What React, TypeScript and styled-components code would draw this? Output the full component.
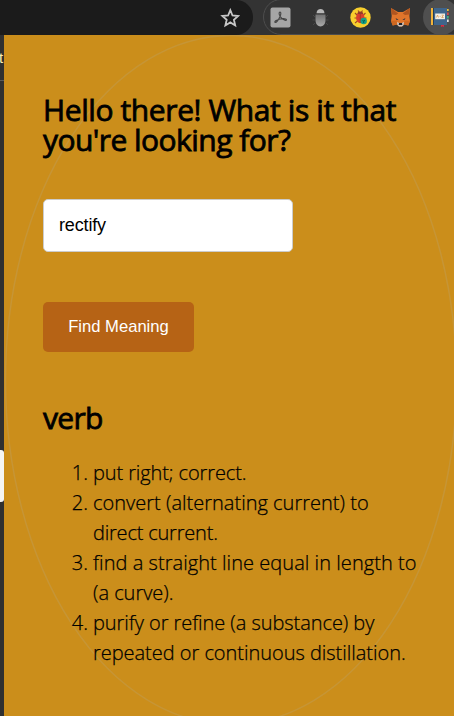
import React from "react";
import styled, { createGlobalStyle } from "styled-components";

const GlobalStyle = createGlobalStyle`
  * { box-sizing: border-box; }
  body { margin: 0; background: #cb8e1b; overflow: hidden; }
`;

const Screen = styled.div`
  width: 454px;
  height: 716px;
  display: flex;
  flex-direction: column;
  overflow: hidden;
  font-family: "Open Sans", "Noto Sans", sans-serif;
`;

const BrowserBar = styled.header`
  height: 35px;
  flex: none;
  display: flex;
  background: #333333;
  overflow: hidden;
`;

const AddressBar = styled.div`
  width: 253px;
  height: 35px;
  flex: none;
  display: flex;
  justify-content: flex-end;
  padding: 8px 13px 0 0;
  background: #1b1b1b;
  border-radius: 0 17px 17px 0;
`;

const Extensions = styled.div`
  width: 220px;
  height: 36px;
  flex: none;
  margin: -1px 0 0 10px;
  display: flex;
  align-items: flex-start;
  padding-top: 7px;
  padding-left: 6px;
  gap: 19px;
  border: 1px solid #4d4d4d;
  border-radius: 18px;
`;

const Extension = styled.span<{ $active?: boolean }>`
  width: ${(p) => (p.$active ? 36 : 21)}px;
  height: ${(p) => (p.$active ? 36 : 21)}px;
  margin: ${(p) => (p.$active ? "-8px 0 0 -7px" : "0")};
  padding-right: ${(p) => (p.$active ? 2 : 0)}px;
  border-radius: 50%;
  background: ${(p) => (p.$active ? "#4f4f4f" : "transparent")};
  display: flex;
  align-items: center;
  justify-content: center;
  flex: none;
`;

const Body = styled.div`
  flex: 1;
  display: flex;
`;

const PageEdge = styled.div`
  width: 4px;
  flex: none;
  display: flex;
  flex-direction: column;
  background: #303030;
  overflow: hidden;
`;

const EdgeHeader = styled.div`
  height: 46px;
  flex: none;
  padding-top: 13px;
  border-bottom: 1px solid #5a5a5a;
  color: #fbeeb0;
  font: 15px/20px "Liberation Sans", sans-serif;
  text-indent: -1px;
`;

const EdgeBubble = styled.div`
  height: 52px;
  margin-top: 369px;
  flex: none;
  background: #f5f5f5;
  border-radius: 0 3px 3px 0;
`;

const Popup = styled.main`
  position: relative;
  flex: 1;
  padding: 60px 28px 0 39px;
  background: #cb8e1b;
  color: #000;
`;

const Ring = styled.svg`
  position: absolute;
  inset: 0;
`;

const Content = styled.div`
  position: relative;
  display: flex;
  flex-direction: column;
  align-items: flex-start;
`;

const Heading = styled.h1`
  margin: 0;
  font-size: 30px;
  line-height: 30px;
  font-weight: 400;
  -webkit-text-stroke: 0.8px #000;
`;

const Line = styled.span<{ $track: number }>`
  display: block;
  white-space: nowrap;
  letter-spacing: ${(p) => p.$track}px;
`;

const WordInput = styled.input`
  width: 250px;
  height: 53px;
  margin-top: 44px;
  padding: 0 15px;
  border: 1px solid #cccccc;
  border-radius: 5px;
  background: #fff;
  color: #000;
  font: 18px "Liberation Sans", Arial, sans-serif;
  letter-spacing: -0.15px;
  outline: none;
`;

const FindButton = styled.button`
  width: 151px;
  height: 50px;
  margin-top: 50px;
  padding: 0;
  border: 0;
  border-radius: 5px;
  background: #b66315;
  color: #fff;
  font: 16.6px "Liberation Sans", Arial, sans-serif;
`;

const PartOfSpeech = styled(Heading).attrs({ as: "h2" })`
  margin-top: 51px;
`;

const Meanings = styled.ol`
  margin: 25px 0 0;
  padding: 0;
  list-style: none;
  font-size: 20px;
  line-height: 30px;
  font-weight: 300;
  -webkit-text-stroke: 0.25px #000;
`;

const Meaning = styled.li`
  display: grid;
  grid-template-columns: 45px auto;
  column-gap: 5px;
`;

const Marker = styled.span`
  text-align: right;
`;

type TextLine = { text: string; track: number };

const greeting: TextLine[] = [
  { text: "Hello there! What is it that", track: -0.4 },
  { text: "you're looking for?", track: -0.55 },
];

const meanings: TextLine[][] = [
  [{ text: "put right; correct.", track: -0.11 }],
  [
    { text: "convert (alternating current) to", track: 0.01 },
    { text: "direct current.", track: -0.2 },
  ],
  [
    { text: "find a straight line equal in length to", track: 0.05 },
    { text: "(a curve).", track: -0.03 },
  ],
  [
    { text: "purify or refine (a substance) by", track: -0.06 },
    { text: "repeated or continuous distillation.", track: -0.03 },
  ],
];

const StarIcon = () => (
  <svg width="20" height="20" viewBox="0 0 20 20">
    <path
      d="M10.3 2.2 L12.5 7.5 L18.2 8 L13.9 11.8 L15.2 17.4 L10.3 14.4 L5.4 17.4 L6.7 11.8 L2.4 8 L8.1 7.5 Z"
      fill="none"
      stroke="#c8c8c8"
      strokeWidth="1.8"
    />
  </svg>
);

const PdfIcon = () => (
  <svg width="21" height="21" viewBox="0 0 21 21">
    <rect x="0.5" y="0.5" width="20" height="20" rx="2" fill="#a5a5a5" />
    <path
      d="M9.6 5.2 C11.4 4.5 11 7.5 9.9 9.8 C8.8 12.4 6.3 16 5 15.4 C3.8 14.5 7.5 12.6 10.3 12 C13.3 11.3 16.9 11.6 16.5 12.9 C15.9 14.1 12.3 12.4 10.9 10.4 C9.5 8.5 8.8 6 9.6 5.2 Z"
      fill="none"
      stroke="#454545"
      strokeWidth="1.1"
    />
  </svg>
);

const GreyBugIcon = () => (
  <svg width="21" height="21" viewBox="0 0 21 21">
    <defs>
      <linearGradient id="shell" x1="0" y1="0" x2="0" y2="1">
        <stop offset="0" stopColor="#727272" />
        <stop offset="1" stopColor="#aaa" />
      </linearGradient>
    </defs>
    <path d="M3 8 L5 10 M2.5 13 H5 M3 18 L5 16 M18 8 L16 10 M18.5 13 H16 M18 18 L16 16" stroke="#484848" />
    <path d="M6.5 6.3 C6.5 0.5 14.5 0.5 14.5 6.3 Z" fill="#b8b8b8" />
    <path d="M5.5 7.5 H15.5 V13 C15.5 21.5 5.5 21.5 5.5 13 Z" fill="url(#shell)" />
  </svg>
);

const RedBugIcon = () => (
  <svg width="21" height="21" viewBox="0 0 21 21">
    <circle cx="10.5" cy="10.5" r="10.2" fill="#f8cf2d" />
    <path
      d="M5 6 L7 8 M4.5 11 H7 M5 16 L7.5 14 M15.5 6 L13.5 8 M16.5 11 H14 M8 3.5 L9.5 5.5 M12.5 3.5 L11.2 5.5"
      stroke="#9b4a27"
      strokeWidth="1.1"
    />
    <ellipse cx="10.3" cy="10.7" rx="4.2" ry="5.5" fill="#d8402c" />
    <path d="M7.4 7 C7.4 3.8 13.2 3.8 13.2 7 Z" fill="#963b2b" />
    <path d="M10.3 7 V16" stroke="#a23226" strokeWidth="0.8" />
    <circle cx="13.7" cy="14" r="3.2" fill="#14a086" />
    <path d="M12.5 13 L13.7 14.2 L15 13 M13.7 14.2 V16" stroke="#075f53" fill="none" />
  </svg>
);

const FoxIcon = () => (
  <svg width="21" height="21" viewBox="0 0 21 21">
    <path d="M1 1 L8 5 H13 L20 1 L19.4 9 L20 14 L18.3 18.5 L14 17.5 L12 19.5 H9 L7 17.5 L2.7 18.5 L1 14 L1.7 9 Z" fill="#e0752b" />
    <path d="M1 1 L8.2 6.5 L6 8 L2 7.5 Z M20 1 L12.8 6.5 L15 8 L19 7.5 Z" fill="#b0551f" />
    <path d="M1 14 L6.5 13.5 L7.2 17.5 L2.7 18.5 Z M20 14 L14.5 13.5 L13.8 17.5 L18.3 18.5 Z" fill="#cf6820" />
    <path d="M5.5 11 L8.6 12.7 L6.6 13 Z M15.5 11 L12.4 12.7 L14.4 13 Z" fill="#30333c" />
    <path d="M7 15 L9 16 H12 L14 15 L13.6 18 L12 19.5 H9 L7.4 18 Z" fill="#ccc6c0" />
    <path d="M9 16 H12 L12.3 18 H8.7 Z" fill="#20232c" />
  </svg>
);

const DictionaryIcon = () => (
  <svg width="20" height="20" viewBox="0 0 20 20">
    <path d="M17 2 H18.7 V4 H17 Z" fill="#eac23d" />
    <path d="M17 5.5 H18.7 V8 H17 Z" fill="#d94848" />
    <path d="M17 9 H18.7 V11.5 H17 Z" fill="#45b284" />
    <path d="M17 12.5 H18.7 V15 H17 Z" fill="#e3e3e3" />
    <path d="M2 1 H17 V18 H2 Z" fill="#3f658b" />
    <path d="M1 1 H3 V18 H1 Z" fill="#f0b33a" />
    <path d="M3 1 H4 V18 H3 Z" fill="#263d55" />
    <path d="M5.2 6.5 H15 V12.2 H5.2 Z" fill="#f1eee5" />
    <path d="M6.5 10.5 L7.5 8 L8.5 10.5 M9.6 9.4 H10.6 M11.6 8.2 H13.5 L11.7 10.5 H13.6" stroke="#dc9b54" strokeWidth="0.8" fill="none" />
    <path d="M11 18 H14 V20 L12.5 19.3 L11 20 Z" fill="#df2742" />
  </svg>
);

export default function App() {
  return (
    <Screen>
      <GlobalStyle />
      <BrowserBar>
        <AddressBar>
          <StarIcon />
        </AddressBar>
        <Extensions>
          <Extension><PdfIcon /></Extension>
          <Extension><GreyBugIcon /></Extension>
          <Extension><RedBugIcon /></Extension>
          <Extension><FoxIcon /></Extension>
          <Extension $active><DictionaryIcon /></Extension>
        </Extensions>
      </BrowserBar>
      <Body>
        <PageEdge>
          <EdgeHeader>t</EdgeHeader>
          <EdgeBubble />
        </PageEdge>
        <Popup>
          <Ring width="450" height="681" viewBox="0 0 450 681">
            <ellipse cx="227" cy="345" rx="225.5" ry="344.5" fill="none" stroke="#c69536" strokeWidth="1.5" />
          </Ring>
          <Content>
            <Heading>
              {greeting.map((l) => (
                <Line key={l.text} $track={l.track}>{l.text}</Line>
              ))}
            </Heading>
            <WordInput defaultValue="rectify" spellCheck={false} />
            <FindButton>Find Meaning</FindButton>
            <PartOfSpeech>
              <Line $track={-0.7}>verb</Line>
            </PartOfSpeech>
            <Meanings>
              {meanings.map((lines, i) => (
                <Meaning key={i}>
                  <Marker>{i + 1}.</Marker>
                  <div>
                    {lines.map((l) => (
                      <Line key={l.text} $track={l.track}>{l.text}</Line>
                    ))}
                  </div>
                </Meaning>
              ))}
            </Meanings>
          </Content>
        </Popup>
      </Body>
    </Screen>
  );
}
